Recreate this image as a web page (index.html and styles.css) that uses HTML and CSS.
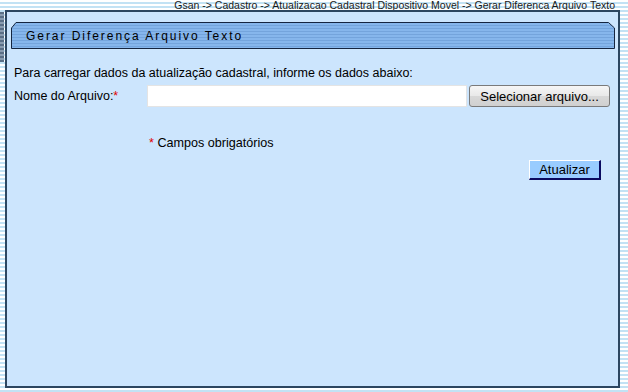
FILE: index.html
```html
<!DOCTYPE html>
<html lang="pt">
<head>
<meta charset="utf-8">
<title>Gerar Diferença Arquivo Texto</title>
<link rel="stylesheet" href="styles.css">
</head>
<body>
<div class="crumb">Gsan -&gt; Cadastro -&gt; Atualizacao Cadastral Dispositivo Movel -&gt; Gerar Diferenca Arquivo Texto</div>
<div class="frame">
  <div class="side"><div class="side-bar"></div></div>
  <div class="panel">
    <div class="title">
      <svg class="title-shape" viewBox="0 0 604 27" preserveAspectRatio="none" aria-hidden="true">
        <defs>
          <pattern id="st" width="4" height="3" patternUnits="userSpaceOnUse">
            <rect width="4" height="3" fill="#86b6ec"/>
            <rect width="4" height="1" fill="#74a4dc"/>
          </pattern>
        </defs>
        <path d="M0.5 26.5 V6 L5 0.5 H597.5 L603.5 6 V26.5 Z" fill="url(#st)" stroke="#152540" stroke-width="1"/>
      </svg>
      <span class="title-text">Gerar Diferença Arquivo Texto</span>
    </div>
    <p class="intro">Para carregar dados da atualização cadastral, informe os dados abaixo:</p>
    <div class="row">
      <label class="label" for="arq">Nome do Arquivo:<span class="req">*</span></label>
      <input class="file-input" id="arq" type="text">
      <button class="file-btn" type="button">Selecionar arquivo...</button>
    </div>
    <div class="note"><span class="req">*</span> Campos obrigatórios</div>
    <div class="actions"><button class="submit" type="button">Atualizar</button></div>
  </div>
</div>
</body>
</html>
```
FILE: styles.css
```css
html, body {
  margin: 0;
  padding: 0;
}
body {
  width: 628px;
  height: 392px;
  overflow: hidden;
  font-family: "Liberation Sans", Arial, sans-serif;
  color: #000;
  background: repeating-linear-gradient(to bottom, #ffffff 0, #ffffff 2px, #c2e2f4 2px, #c2e2f4 4px);
}
.crumb {
  height: 10px;
  line-height: 10px;
  font-size: 10.5px;
  text-align: right;
  padding-right: 13px;
  color: #1a1a1a;
  white-space: nowrap;
}
.frame {
  display: flex;
  align-items: flex-start;
}
.side {
  width: 5px;
  padding-top: 2px;
}
.side-bar {
  width: 4px;
  height: 50px;
  background: repeating-linear-gradient(to bottom, #5a6f86 0, #5a6f86 2px, #8a9cb0 2px, #8a9cb0 4px);
}
.panel {
  width: 611px;
  height: 364px;
  border: 2px solid #2c4660;
  background: #cce5fd;
  padding: 10px 0 0 0;
  box-sizing: content-box;
}
.title {
  position: relative;
  margin: 0 0 0 4px;
  width: 604px;
  height: 27px;
  display: flex;
  align-items: center;
}
.title-shape {
  position: absolute;
  left: 0;
  top: 0;
  width: 604px;
  height: 27px;
}
.title-text {
  position: relative;
  padding-left: 15px;
  font-size: 12px;
  letter-spacing: 1.95px;
  color: #000;
}
.intro {
  margin: 17px 0 0 7px;
  font-size: 12.5px;
  line-height: 14px;
}
.row {
  display: flex;
  align-items: center;
  margin: 5px 0 0 7px;
  height: 22px;
}
.label {
  width: 133px;
  font-size: 12.5px;
}
.req {
  color: #e00000;
}
.file-input {
  width: 320px;
  height: 22px;
  box-sizing: border-box;
  border: 1px solid #e4e4e4;
  background: #fff;
  margin: 0 2px 0 0;
  padding: 0;
}
.file-btn {
  width: 141px;
  height: 22px;
  box-sizing: border-box;
  border: 1px solid #7a7a7a;
  border-radius: 3px;
  background: linear-gradient(to bottom, #f6f6f6 0%, #e8e8e8 50%, #d8d8d8 51%, #d0d0d0 100%);
  font-family: "Liberation Sans", Arial, sans-serif;
  font-size: 13px;
  color: #000;
  padding: 0;
}
.note {
  margin: 29px 0 0 142px;
  font-size: 12.6px;
  line-height: 14px;
}
.actions {
  display: flex;
  justify-content: flex-end;
  margin: 10px 0 0 0;
  padding-right: 17px;
}
.submit {
  width: 72px;
  height: 20px;
  box-sizing: border-box;
  border-style: solid;
  border-width: 1px 2px 2px 1px;
  border-color: #ffffff #0a0a60 #0a0a60 #ffffff;
  background: #99ccff;
  font-family: "Liberation Sans", Arial, sans-serif;
  font-size: 13px;
  color: #000;
  padding: 0;
}
```
